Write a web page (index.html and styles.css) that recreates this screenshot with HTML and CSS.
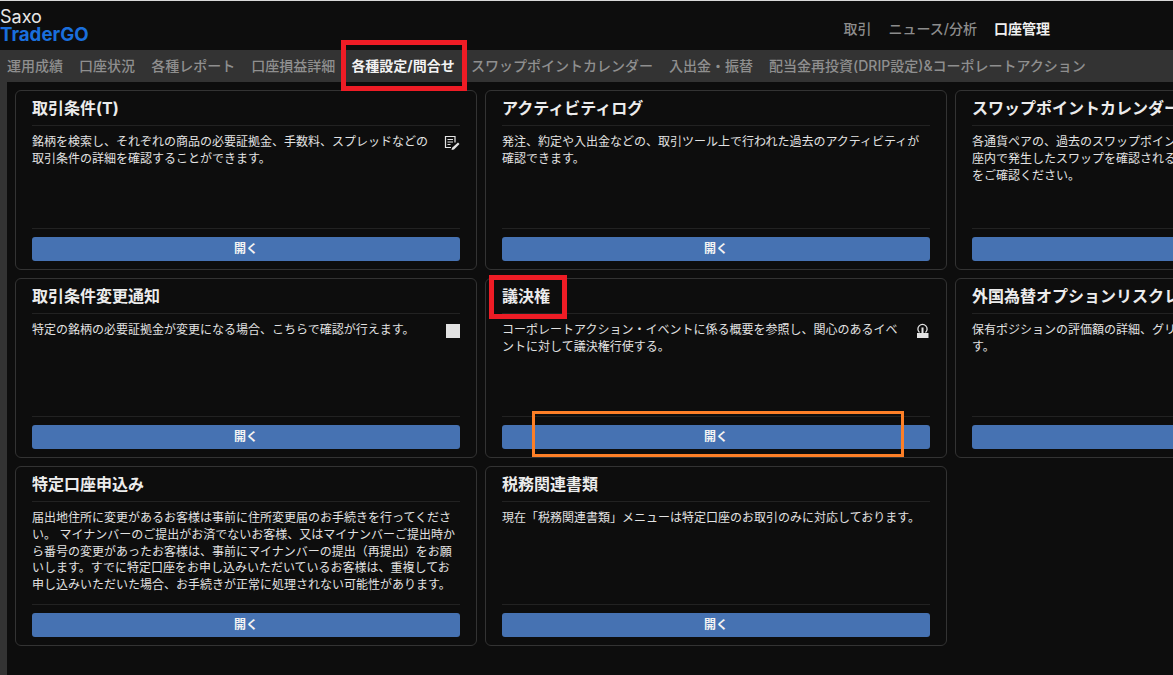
FILE: index.html
```html
<!DOCTYPE html>
<html lang="ja">
<head>
<meta charset="utf-8">
<title>Saxo TraderGO</title>
<link rel="stylesheet" href="styles.css">
</head>
<body>
<header class="topbar">
  <div class="logo"><div class="logo-top">Saxo</div><div class="logo-bottom">TraderGO</div></div>
  <nav class="mainnav">
    <a>取引</a><a>ニュース/分析</a><a class="on">口座管理</a>
  </nav>
</header>
<nav class="tabs">
  <a>運用成績</a><a>口座状況</a><a>各種レポート</a><a>口座損益詳細</a><a class="on">各種設定/問合せ</a><a>スワップポイントカレンダー</a><a>入出金・振替</a><a>配当金再投資(DRIP設定)&amp;コーポレートアクション</a>
</nav>
<main class="content">
  <div class="grid">
    <section class="card">
      <h2>取引条件(T)</h2>
      <div class="body"><p>銘柄を検索し、それぞれの商品の必要証拠金、手数料、スプレッドなどの取引条件の詳細を確認することができます。</p>
        <svg class="icon" viewBox="0 0 16 16"><path d="M7 12.500H1.500V1.500h9.500v6" fill="none" stroke="#e4e4e4" stroke-width="1.200"/><path d="M3.500 4.500h5.500M3.500 7h5.500M3.500 9.500h3" stroke="#e4e4e4" stroke-width="1.100"/><path d="M14 7.500l1.500 1.500-5.500 5.500-2.500.6.600-2.400z" fill="#e4e4e4"/></svg>
      </div>
      <div class="foot"><button>開く</button></div>
    </section>
    <section class="card">
      <h2>アクティビティログ</h2>
      <div class="body"><p>発注、約定や入出金などの、取引ツール上で行われた過去のアクティビティが確認できます。</p></div>
      <div class="foot"><button>開く</button></div>
    </section>
    <section class="card">
      <h2>スワップポイントカレンダー</h2>
      <div class="body"><p>各通貨ペアの、過去のスワップポイントの履歴を見られます。またお客様の口座内で発生したスワップを確認されるには、お客様の各種レポートのメニューをご確認ください。</p></div>
      <div class="foot"><button>開く</button></div>
    </section>
    <section class="card">
      <h2>取引条件変更通知</h2>
      <div class="body"><p>特定の銘柄の必要証拠金が変更になる場合、こちらで確認が行えます。</p><span class="square"></span></div>
      <div class="foot"><button>開く</button></div>
    </section>
    <section class="card">
      <h2>議決権</h2>
      <div class="body"><p>コーポレートアクション・イベントに係る概要を参照し、関心のあるイベントに対して議決権行使する。</p>
        <svg class="icon" viewBox="0 0 16 16"><path d="M5.500 9.500a4.600 4.600 0 1 1 6 0" fill="none" stroke="#e4e4e4" stroke-width="1.300"/><path d="M7.500 4.500h2v5.500h5v5H3v-5h4.500z" fill="#e4e4e4"/></svg>
      </div>
      <div class="foot"><button>開く</button></div>
    </section>
    <section class="card">
      <h2>外国為替オプションリスクレポート</h2>
      <div class="body"><p>保有ポジションの評価額の詳細、グリークスなどのリスク指標を確認できます。</p></div>
      <div class="foot"><button>開く</button></div>
    </section>
    <section class="card">
      <h2>特定口座申込み</h2>
      <div class="body"><p>届出地住所に変更があるお客様は事前に住所変更届のお手続きを行ってください。 マイナンバーのご提出がお済でないお客様、又はマイナンバーご提出時から番号の変更があったお客様は、事前にマイナンバーの提出（再提出）をお願いします。すでに特定口座をお申し込みいただいているお客様は、重複してお申し込みいただいた場合、お手続きが正常に処理されない可能性があります。</p></div>
      <div class="foot"><button>開く</button></div>
    </section>
    <section class="card">
      <h2>税務関連書類</h2>
      <div class="body"><p>現在「税務関連書類」メニューは特定口座のお取引のみに対応しております。</p></div>
      <div class="foot"><button>開く</button></div>
    </section>
  </div>
</main>
<div class="mark mark-tab"></div>
<div class="mark mark-title"></div>
<div class="mark-orange"></div>
</body>
</html>
```
FILE: styles.css
```css
* { box-sizing: border-box; }
html, body { height: 100%; }
body {
  margin: 0;
  width: 1173px;
  height: 675px;
  overflow: hidden;
  position: relative;
  background: #0d0d0d;
  color: #e8e8e8;
  font-family: Inter, "Noto Sans CJK JP", sans-serif;
  border-top: 1px solid #d8d8d8;
  display: flex;
  flex-direction: column;
}
.topbar {
  height: 49px;
  flex: none;
  display: flex;
  justify-content: space-between;
  align-items: flex-start;
  background: #0d0d0d;
}
.logo { padding-top: 7px; line-height: 18px; }
.logo-top { font-size: 18px; color: #e8e8e8; }
.logo-bottom { font-size: 18.700px; font-weight: 700; color: #1a6fdc; }
.mainnav {
  display: flex;
  gap: 17px;
  padding: 18px 123px 0 0;
  font-size: 14px;
  line-height: 20px;
  font-weight: 500;
  color: #8c8c8c;
}
.mainnav .on { color: #f0f0f0; font-weight: 700; }
.tabs {
  height: 32px;
  flex: none;
  display: flex;
  gap: 16.100px;
  padding-left: 7px;
  background: #333333;
  font-size: 14px;
  line-height: 32px;
  font-weight: 500;
  color: #8f8f8f;
  white-space: nowrap;
}
.tabs .on { color: #f2f2f2; font-weight: 700; }
.content {
  flex: 1;
  border-left: 7px solid #333333;
  padding: 8px 0 0 8px;
  min-height: 0;
}
.grid {
  display: grid;
  grid-template-columns: repeat(3, 462px);
  grid-auto-rows: 180px;
  gap: 8px;
}
.card {
  display: flex;
  flex-direction: column;
  background: #0d0d0d;
  border: 1px solid #333333;
  border-radius: 6px;
  padding: 0 16px;
}
.card h2 {
  margin: 0;
  height: 35px;
  flex: none;
  font-size: 16px;
  line-height: 34px;
  font-weight: 700;
  color: #ececec;
  white-space: nowrap;
  border-bottom: 1px solid #222222;
}
.body {
  flex: 1;
  display: flex;
  justify-content: space-between;
  align-items: flex-start;
  gap: 16px;
  padding-top: 8px;
  min-height: 0;
}
.body p {
  margin: 0;
  font-size: 12px;
  line-height: 16.800px;
  color: #e2e2e2;
  flex: 1;
}
.icon { width: 16px; height: 16px; flex: none; margin-top: 1px; }
.square {
  width: 14px;
  height: 14px;
  flex: none;
  margin-top: 2px;
  background: #e2e2e2;
}
.foot {
  flex: none;
  height: 41px;
  padding-top: 8px;
  border-top: 1px solid #222222;
}
.foot button {
  display: block;
  width: 100%;
  height: 24px;
  padding: 0;
  border: 0;
  border-radius: 3px;
  background: #4672b2;
  color: #f4f4f4;
  font: 700 12px/24px Inter, "Noto Sans CJK JP", sans-serif;
}
.mark {
  position: absolute;
  border: 5px solid #ee1c25;
}
.mark-tab { left: 341px; top: 39px; width: 126px; height: 51px; }
.mark-title { left: 489px; top: 274px; width: 78px; height: 44px; }
.mark-orange {
  position: absolute;
  left: 532px;
  top: 410px;
  width: 372px;
  height: 46px;
  border: 3px solid #fd7f27;
}
```
